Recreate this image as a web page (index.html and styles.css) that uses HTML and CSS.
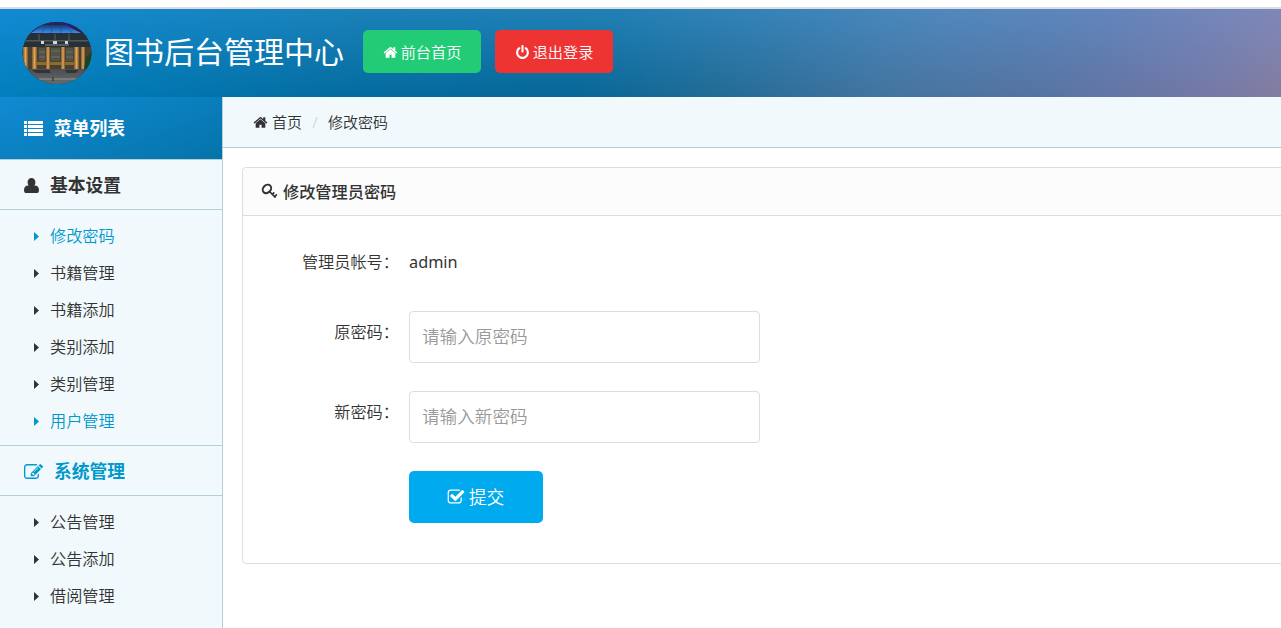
FILE: index.html
```
<!DOCTYPE html>
<html lang="zh-CN">
<head>
<meta charset="utf-8">
<title>图书后台管理中心</title>
<link rel="stylesheet" href="styles.css">
</head>
<body>
<svg class="defs" width="0" height="0" aria-hidden="true">
  <symbol id="home" viewBox="0 0 1792 1792"><path d="M1472 992v480q0 26-19 45t-45 19h-384v-384h-256v384h-384q-26 0-45-19t-19-45v-480q0-1 .5-3t.5-3l575-474 575 474q1 2 1 6zm223-69l-62 74q-8 9-21 11h-3q-13 0-21-7l-692-577-692 577q-12 8-24 7-13-2-21-11l-62-74q-8-10-7-23.500t11-21.500l719-599q32-26 76-26t76 26l244 204v-195q0-14 9-23t23-9h192q14 0 23 9t9 23v408l219 182q10 8 11 21.500t-7 23.500z"/></symbol>
  <symbol id="arrow" viewBox="0 0 5 9"><path d="M0 0L5 4.500L0 9Z"/></symbol>
</svg>
<header class="header">
  <svg class="logo" viewBox="0 0 70 62">
    <defs>
      <clipPath id="oval"><ellipse cx="35" cy="31" rx="34.500" ry="31"/></clipPath>
      <linearGradient id="roof" x1="0" y1="0" x2="0" y2="1"><stop offset="0" stop-color="#123a78"/><stop offset="1" stop-color="#388fee"/></linearGradient>
      <linearGradient id="pillar" x1="0" y1="0" x2="1" y2="0"><stop offset="0" stop-color="#81542b"/><stop offset=".5" stop-color="#dda75f"/><stop offset="1" stop-color="#795226"/></linearGradient>
      <linearGradient id="stairs" x1="0" y1="0" x2="0" y2="1"><stop offset="0" stop-color="#4b4e50"/><stop offset="1" stop-color="#656b6d"/></linearGradient>
    </defs>
    <g clip-path="url(#oval)">
      <rect width="70" height="62" fill="#2b2825"/>
      <path d="M0 0H70V17L56 8L40 2H22L8 12H0Z" fill="#281e78"/>
      <path d="M20 3H44L59 11H9Z" fill="url(#roof)"/>
      <path d="M24 3L20 11M31 3L29 11M38 3L39 11M45 4L50 11" stroke="#174f98" stroke-width=".6" fill="none"/>
      <path d="M9 11H60L70 17V25H0V18Z" fill="#253039"/>
      <path d="M0 18H70V19.500H0Z" fill="#56595b"/>
      <path d="M19 19h3v3h-3zM31 19h4v3h-4zM43 19h3v3h-3z" fill="#d2d5d6"/>
      <path d="M23 23H47" stroke="#858785"/>
      <path d="M0 25H70V48H0Z" fill="#49402f"/>
      <path d="M17 26h6v13h-6zM29 26h9v13h-9zM44 26h7v13h-7z" fill="#51544a"/>
      <path d="M17 30h6M17 35h6M29 29h9M29 35h9M44 30h7M44 35h7" stroke="#74786a" stroke-width=".8"/>
      <path d="M14 41.500H55" stroke="#8b6c28" stroke-width="3"/>
      <g fill="url(#pillar)"><rect x="1" y="25" width="5" height="22"/><rect x="10" y="25" width="5" height="22"/><rect x="24" y="25" width="4" height="22"/><rect x="39" y="25" width="4" height="22"/><rect x="52" y="25" width="5" height="22"/><rect x="59" y="25" width="4" height="22"/></g>
      <path d="M17 12V18M33 12V18M47 12V18" stroke="#aa8347" opacity=".55"/>
      <path d="M0 47H70V62H0Z" fill="url(#stairs)"/>
      <path d="M10 48H27L29 51H14ZM43 48H56L54 51H45Z" fill="#303438"/>
      <path d="M17 57H55" stroke="#9b9490"/>
      <path d="M31 55V59" stroke="#222"/>
      <path d="M64 35L70 31V49L62 47Z" fill="#174421"/>
    </g>
  </svg>
  <h1 class="brand">图书后台管理中心</h1>
  <a class="btn btn-green"><svg class="icon"><use href="#home"/></svg>前台首页</a>
  <a class="btn btn-red"><svg class="icon" viewBox="0 0 1792 1792"><path d="M1664 896q0 156-61 298t-164 245-245 164-298 61-298-61-245-164-164-245-61-298q0-182 80.500-343t226.500-270q43-32 95.500-25t83.500 50q32 42 24.500 94.500t-49.500 84.500q-98 74-151.500 181t-53.500 228q0 104 40.500 198.500t109.500 163.500 163.500 109.500 198.500 40.500 198.500-40.500 163.500-109.500 109.500-163.500 40.500-198.500q0-121-53.500-228t-151.500-181q-42-32-49.500-84.500t24.500-94.500q31-43 84-50t95 25q146 109 226.500 270t80.500 343zm-640-768v640q0 52-38 90t-90 38-90-38-38-90v-640q0-52 38-90t90-38 90 38 38 90z"/></svg>退出登录</a>
</header>
<div class="layout">
  <nav class="sidebar">
    <div class="side-title"><svg class="list-icon" viewBox="0 0 19 15"><path d="M0 0h3v3H0zM4 0h15v3H4zM0 4h3v3H0zM4 4h15v3H4zM0 8h3v3H0zM4 8h15v3H4zM0 12h3v3H0zM4 12h15v3H4z"/></svg>菜单列表</div>
    <h2 class="group"><svg class="user-icon" viewBox="0 0 15 15"><path d="M7.500 0C9.800 0 11.400 1.700 11.400 4.200C11.400 5.700 10.900 6.800 10.200 7.500C13.500 7.300 15 9.200 15 12.200C15 14.200 14 15 12.500 15H2.500C1 15 0 14.200 0 12.200C0 9.200 1.500 7.300 4.800 7.500C4.100 6.800 3.600 5.700 3.600 4.200C3.600 1.700 5.200 0 7.500 0Z"/></svg>基本设置</h2>
    <ul class="menu">
      <li class="active"><svg class="arrow"><use href="#arrow"/></svg>修改密码</li>
      <li><svg class="arrow"><use href="#arrow"/></svg>书籍管理</li>
      <li><svg class="arrow"><use href="#arrow"/></svg>书籍添加</li>
      <li><svg class="arrow"><use href="#arrow"/></svg>类别添加</li>
      <li><svg class="arrow"><use href="#arrow"/></svg>类别管理</li>
      <li class="active"><svg class="arrow"><use href="#arrow"/></svg>用户管理</li>
    </ul>
    <h2 class="group group-system"><svg class="edit-icon" viewBox="0 128 1792 1408"><path d="M888 1184l116-116-152-152-116 116v56h96v96h56zm440-720q-16-16-33 1l-350 350q-17 17-1 33t33-1l350-350q17-17 1-33zm80 594v190q0 119-84.500 203.500t-203.500 84.500h-832q-119 0-203.500-84.500t-84.500-203.500v-832q0-119 84.500-203.500t203.500-84.500h832q63 0 117 25 15 7 18 23 3 17-9 29l-49 49q-14 14-32 8-23-6-45-6h-832q-66 0-113 47t-47 113v832q0 66 47 113t113 47h832q66 0 113-47t47-113v-126q0-13 9-22l64-64q15-15 35-7t20 29zm-96-738l288 288-672 672h-288v-288zm444 132l-92 92-288-288 92-92q28-28 68-28t68 28l152 152q28 28 28 68t-28 68z"/></svg>系统管理</h2>
    <ul class="menu">
      <li><svg class="arrow"><use href="#arrow"/></svg>公告管理</li>
      <li><svg class="arrow"><use href="#arrow"/></svg>公告添加</li>
      <li><svg class="arrow"><use href="#arrow"/></svg>借阅管理</li>
    </ul>
  </nav>
  <main class="main">
    <div class="crumbs"><svg class="icon"><use href="#home"/></svg><span>首页</span><span class="slash">/</span><span>修改密码</span></div>
    <section class="panel">
      <div class="panel-head"><svg class="key-icon" viewBox="0 0 16 16"><g fill="none" stroke="currentColor"><ellipse cx="5.600" cy="5.600" rx="4.400" ry="3.500" transform="rotate(-45 5.600 5.600)" stroke-width="1.900"/><path d="M8 8L13.700 13.700M10.600 10.800L12.500 8.900M12.900 12.800L14.900 10.800" stroke-width="1.600"/></g></svg>修改管理员密码</div>
      <form class="form">
        <div class="row row-text"><label>管理员帐号：</label><span class="account">admin</span></div>
        <div class="row"><label>原密码：</label><input type="password" placeholder="请输入原密码"></div>
        <div class="row"><label>新密码：</label><input type="password" placeholder="请输入新密码"></div>
        <div class="row"><button class="submit" type="button"><svg class="check-icon" viewBox="0 128 1792 1408"><path d="M1472 930v318q0 119-84.500 203.500t-203.500 84.500h-832q-119 0-203.500-84.500t-84.500-203.500v-832q0-119 84.500-203.500t203.500-84.500h832q63 0 117 25 15 7 18 23 3 17-9 29l-49 49q-10 10-23 10-3 0-9-2-23-6-45-6h-832q-66 0-113 47t-47 113v832q0 66 47 113t113 47h832q66 0 113-47t47-113v-254q0-13 9-22l64-64q10-10 23-10 6 0 12 3 20 8 20 29zm231-489l-814 814q-24 24-57 24t-57-24l-430-430q-24-24-24-57t24-57l110-110q24-24 57-24t57 24l263 263 647-647q24-24 57-24t57 24l110 110q24 24 24 57t-24 57z"/></svg>提交</button></div>
      </form>
    </section>
  </main>
</div>
</body>
</html>
```
FILE: styles.css
```
* { box-sizing: border-box; }
body {
  margin: 0;
  height: 628px;
  overflow: hidden;
  display: flex;
  flex-direction: column;
  padding-top: 7px;
  background: #fff;
  color: #333;
  font: 16px/24px "Noto Sans", "Noto Sans CJK SC", sans-serif;
  font-weight: 350;
}
svg { display: block; flex: none; fill: currentColor; }
.defs { position: absolute; }
.header {
  position: relative;
  z-index: 0;
  flex: none;
  display: flex;
  align-items: center;
  height: 90px;
  padding: 0 0 3px 22px;
  border-top: 2px solid #dcdde0;
  color: #fff;
  background: linear-gradient(97deg, #0080bd 0%, #046ca0 28%, #066797 45%, #216b95 56%, #43749f 69%, #5874a2 82%, #7178a6 93%, #837da0 100%);
}
.header::before {
  content: "";
  position: absolute;
  z-index: -1;
  inset: 0;
  background: linear-gradient(97deg, #128ad3 0%, #1b82b9 27%, #2380b5 48%, #3b84b9 62%, #5088bd 73%, #6285bc 86%, #8088b8 100%);
  -webkit-mask-image: linear-gradient(#000, transparent);
  mask-image: linear-gradient(#000, transparent);
}
.logo { width: 70px; height: 62px; margin-top: 3px; }
.brand { margin: 0 19px 0 12px; font-size: 30px; font-weight: 400; line-height: 44px; white-space: nowrap; }
.btn {
  display: flex;
  align-items: center;
  justify-content: center;
  gap: 3px;
  width: 118px;
  height: 43px;
  margin-right: 14px;
  padding: 1px 0 0;
  border-radius: 5px;
  font-size: 15.200px;
}
.btn-green { background: #22cc77; }
.btn-red { background: #ee3333; }
.icon { width: 15px; height: 15px; }
.layout { flex: 1; min-height: 0; display: flex; }
.sidebar { flex: none; width: 223px; border-right: 1px solid #b5cfd9; background: #f1f9fc; }
.side-title {
  display: flex;
  align-items: center;
  gap: 11px;
  height: 62px;
  padding-left: 24px;
  color: #fff;
  font-size: 17.800px;
  font-weight: 700;
  background: linear-gradient(160deg, #128ad3 0%, #0a80bf 50%, #0573a9 100%);
}
.side-title, .group { line-height: 26px; }
.list-icon { width: 19px; height: 15px; }
.group {
  display: flex;
  align-items: center;
  gap: 11px;
  height: 51px;
  margin: 0;
  padding: 1px 0 0 24px;
  border: solid #b5cfd9;
  border-width: 1px 0;
  font-size: 17.800px;
  font-weight: 700;
}
.user-icon { width: 15px; height: 15px; }
.group-system { color: #0099cc; }
.edit-icon { width: 19px; height: 15px; }
.menu { margin: 0; padding: 8px 0 5px; list-style: none; }
.menu li { display: flex; align-items: center; gap: 11px; height: 37px; padding: 0 0 2px 34px; font-size: 16.200px; }
.menu .active { color: #0099cc; }
.arrow { width: 5px; height: 9px; margin-top: 2px; }
.main { flex: 1; min-width: 0; }
.crumbs {
  display: flex;
  align-items: center;
  height: 51px;
  padding-left: 30px;
  border-bottom: 1px solid #b5cfd9;
  background: #f1f9fc;
  font-size: 15px;
}
.crumbs .icon { margin-right: 4px; }
.slash { width: 26px; text-align: center; color: #ccc; }
.panel { height: 397px; margin: 19px -8px 0 19px; border: 1px solid #ddd; border-radius: 4px; }
.panel-head {
  display: flex;
  align-items: center;
  gap: 5px;
  height: 48px;
  padding-left: 18px;
  border-bottom: 1px solid #ddd;
  border-radius: 4px 0 0;
  background: #fcfcfc;
  font-size: 16.200px;
  font-weight: 500;
}
.key-icon { width: 17px; height: 17px; }
.form { display: flex; flex-direction: column; gap: 28px; padding: 34px 0 0 50px; }
.row { display: flex; padding-left: 116px; height: 52px; }
.row label { flex: none; width: 116px; margin-left: -116px; padding: 9px 10px 0 0; text-align: right; font-size: 16.200px; white-space: nowrap; }
.row-text { height: 33px; }
.row-text label { padding-top: 0; }
.account { font-weight: 400; font-size: 16.300px; }
.row input {
  width: 351px;
  height: 52px;
  padding: 0 12px 2px;
  border: 1px solid #ddd;
  border-radius: 4px;
  font: inherit;
  font-size: 17.600px;
}
.row input::placeholder { color: #999; opacity: 1; }
.submit {
  display: flex;
  align-items: center;
  justify-content: center;
  gap: 4px;
  width: 134px;
  height: 52px;
  padding: 0 1px 1px 0;
  border: 0;
  border-radius: 5px;
  background: #00aaee;
  color: #fff;
  font: inherit;
  font-size: 17.800px;
}
.check-icon { width: 18px; height: 15px; }
```
